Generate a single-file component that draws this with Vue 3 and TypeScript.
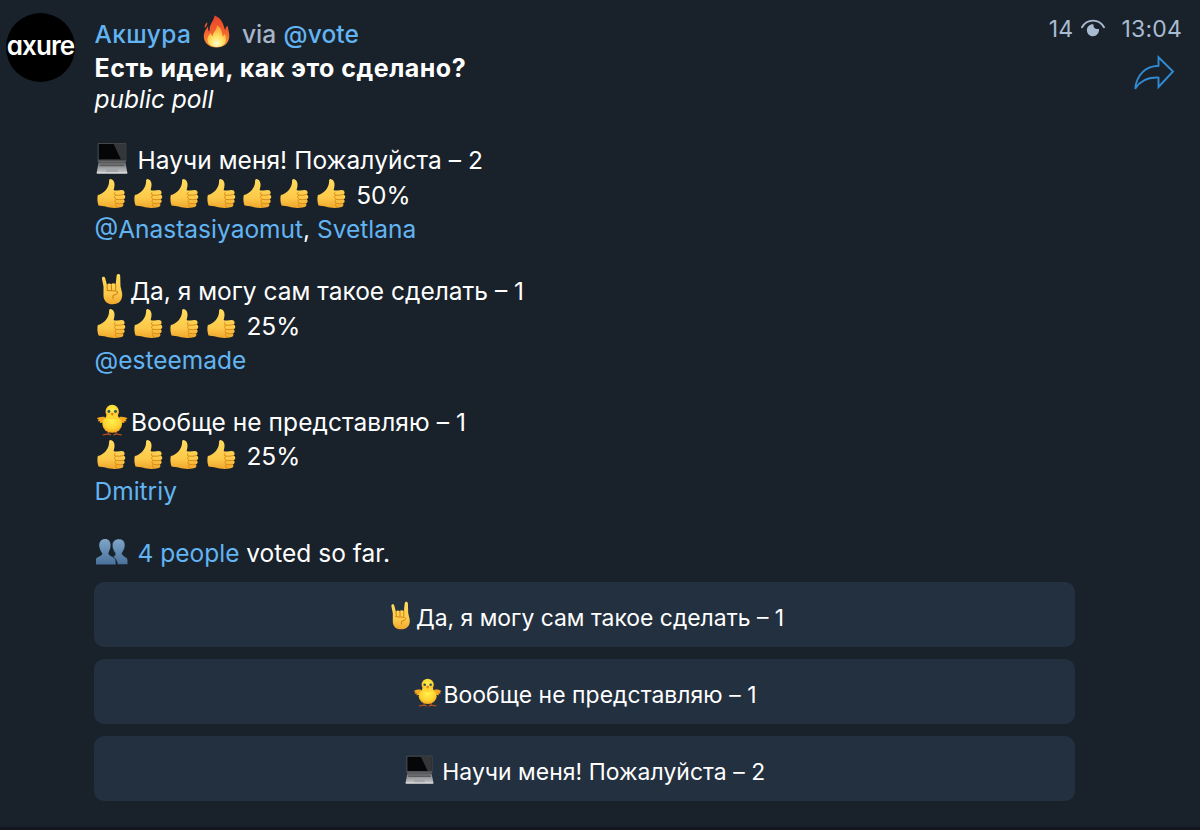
<script setup lang="ts">
interface Voter {
  name: string
}
interface PollOption {
  id: string
  icon: string
  label: string
  thumbs: number
  percent: string
  voters: Voter[]
}

const options: PollOption[] = [
  {
    id: 'teach',
    icon: 'laptop',
    label: 'Научи меня! Пожалуйста – 2',
    thumbs: 7,
    percent: '50%',
    voters: [{ name: '@Anastasiyaomut' }, { name: 'Svetlana' }],
  },
  {
    id: 'self',
    icon: 'horns',
    label: 'Да, я могу сам такое сделать – 1',
    thumbs: 4,
    percent: '25%',
    voters: [{ name: '@esteemade' }],
  },
  {
    id: 'noidea',
    icon: 'chick',
    label: 'Вообще не представляю – 1',
    thumbs: 4,
    percent: '25%',
    voters: [{ name: 'Dmitriy' }],
  },
]

const buttons: PollOption[] = [options[1], options[2], options[0]]
</script>

<template>
  <svg class="defs" width="0" height="0" aria-hidden="true">
    <defs>
      <linearGradient id="skin" x1="0" y1="0" x2="0" y2="1">
        <stop offset="0" stop-color="#ffdc5e" />
        <stop offset="0.65" stop-color="#fdc94a" />
        <stop offset="1" stop-color="#efa62a" />
      </linearGradient>
      <linearGradient id="flame" x1="0" y1="0" x2="0" y2="1">
        <stop offset="0" stop-color="#e8412b" />
        <stop offset="0.5" stop-color="#f4602c" />
        <stop offset="1" stop-color="#fb9a34" />
      </linearGradient>
      <radialGradient id="flameCore" cx="0.5" cy="0.85" r="0.75">
        <stop offset="0" stop-color="#fffbd0" />
        <stop offset="0.45" stop-color="#ffe263" />
        <stop offset="1" stop-color="#fba637" />
      </radialGradient>
      <radialGradient id="down" cx="0.5" cy="0.35" r="0.7">
        <stop offset="0" stop-color="#fff04f" />
        <stop offset="0.6" stop-color="#ffd32f" />
        <stop offset="1" stop-color="#f3981b" />
      </radialGradient>
      <linearGradient id="bust" x1="0" y1="0" x2="0" y2="1">
        <stop offset="0" stop-color="#7fa6c9" />
        <stop offset="1" stop-color="#49709a" />
      </linearGradient>
      <linearGradient id="deck" x1="0" y1="0" x2="0" y2="1">
        <stop offset="0" stop-color="#77787a" />
        <stop offset="1" stop-color="#c9cacc" />
      </linearGradient>

      <symbol id="thumb" viewBox="0 0 32 32">
        <path fill="url(#skin)" d="M1.900 17.600C4.600 17 8 15.200 10.200 12.400C12.200 9.700 13.500 7 13.500 3.600C13.400 1.500 14.400 .8 15.800 1.200C18.700 2 19.700 5.700 18.900 9.200L18.200 12.300C18.800 12.900 20.600 13.100 22 12.900L26.400 12.500C29.700 12.300 30.600 16.200 28.300 17.100C31 17.900 30.700 21.500 28.200 22C30.400 23 29.800 26 27.500 26.400C29.200 27.500 28 30 25.600 30.300C20.700 31.400 14.500 31.200 10.700 29.800C7.800 28.700 4.500 28.900 2.600 28.400C1.500 25.500 1 20.900 1.900 17.600Z" />
        <path fill="none" stroke="#d98a18" stroke-width="1" stroke-linecap="round" d="M20.600 17.700Q24.600 18.300 28.300 17.100M20.800 22.100Q24.600 22.800 28.200 22M20.900 26.100Q24.300 27.100 27.500 26.400M19.600 14.900C18.200 16 18.600 17.300 20.600 17.700C18.700 18.700 18.700 21 20.800 22.100C19.400 22.900 19.200 25 20.900 26.100C19.500 27.300 20 28.900 21.400 29.600" />
      </symbol>

      <symbol id="horns" viewBox="0 0 32 32">
        <path fill="url(#skin)" d="M5.900 5.600C5.800 3.300 8.500 3 9.200 5.200L11 12C11.800 10.300 14 10 15.200 11.300C16.200 9.800 18.600 9.800 19.700 11.300L20.600 2.800C20.900 .3 24.100 .3 24.200 2.900L24.500 13.200L26.100 20C27.200 27.300 22.500 31.300 16.700 31.300C10.200 31.300 7.300 27 7.500 21.700L7.500 13.500Z" />
        <path fill="none" stroke="#cf8014" stroke-width="1.100" stroke-linecap="round" d="M11 12L11.300 16.600M15.400 11.700L15.500 16.600M19.700 11.500L19.600 16.700M10.800 17.200C13.300 18.100 18.700 17.400 20.300 18C22.600 19 21.500 21.500 18.800 21.700C16.500 21.900 16.800 24 17.200 25.400" />
      </symbol>

      <symbol id="laptop" viewBox="0 0 32 32">
        <rect x="1.700" y=".9" width="28.500" height="19.700" rx="1.200" fill="#55575a" />
        <rect x="2.600" y="1.800" width="26.700" height="15.800" fill="#050608" />
        <path fill="#34363a" d="M17.500 1.800H29.300V17.600H25Z" />
        <path fill="url(#deck)" d="M2.600 20.600H29.400L31.300 30.400Q31.300 31.500 30.400 31.500H1.600Q.7 31.500 .7 30.400Z" />
        <path fill="#4c4d50" d="M4.400 17.800H27.600L28.700 24.300H3.300Z" opacity=".85" />
        <path stroke="#8b8c8f" stroke-width=".5" d="M4 19.700H28M3.700 21.300H28.300M3.500 22.800H28.500" />
        <path fill="#a3a4a7" d="M10.800 25.600H21.200L22 30.300H10Z" />
        <path fill="#dedfe0" d="M.8 30.300H31.300V31.500H.8Z" />
      </symbol>

      <symbol id="chick" viewBox="0 0 32 32">
        <path fill="none" stroke="#b5501c" stroke-width="1.300" stroke-linecap="round" d="M12.300 27.500V30.200M20 27.500V30.200M7.200 30.800L12.300 29.900L14.600 30.800M17.700 30.800L20 29.900L25.200 30.800" />
        <path fill="#f7a823" d="M9 13C5.500 12.400 2.500 13.300 .8 14.600L2.700 15.400L1.600 17.300L4 17.200L3.900 18.900L8.500 18.400ZM23.300 13C26.800 12.400 29.800 13.300 31.500 14.600L29.600 15.400L30.700 17.300L28.300 17.200L28.400 18.900L23.700 18.400Z" />
        <ellipse cx="16.200" cy="20" rx="9.900" ry="8.700" fill="url(#down)" />
        <ellipse cx="16.200" cy="7.700" rx="6.700" ry="7" fill="url(#down)" />
        <path fill="#ffd634" d="M10.500 11H21.900L22.900 15H9.500Z" />
        <circle cx="12.900" cy="7.500" r="1.450" fill="#2d536b" />
        <circle cx="19.500" cy="7.500" r="1.450" fill="#2d536b" />
        <path fill="#e97c1c" d="M14.400 9.300Q16.200 8 18 9.300L16.200 12Z" />
      </symbol>

      <symbol id="busts" viewBox="0 0 32 32">
        <path fill="url(#bust)" d="M10 3C13.700 3 15.500 5.700 15.500 9.200C15.500 12.600 13.900 15.400 13.300 16.900C12.900 20 19.300 20.700 20.300 23.200L20.600 28.600H.5V24.200C.5 20.700 7.300 20.500 7.300 17.500C6 15.700 4 12.500 4.100 9.200C4.100 5.700 6.300 3 10 3Z" transform="translate(-.9 0)" />
        <path fill="url(#bust)" stroke="#19222b" stroke-width=".5" d="M22.900 3C27 3 29 5.700 29 9.200C29 12.600 26.800 15.700 26 17.100C25.600 20.500 31.800 20.700 31.800 24.200V28.600H21.600C21 24.600 19.500 22.300 17 20.800C18.900 20.200 19.500 18.800 19.200 17.100C17.900 15.400 16.300 12.600 16.300 9.200C16.300 5.700 18.900 3 22.900 3Z" />
      </symbol>
    </defs>
  </svg>

  <main class="message">
    <div class="avatar"><span>axure</span></div>

    <section class="content">
      <div class="line author">
        <span class="name">Акшура</span>
        <svg class="fire" viewBox="0 0 27 33">
          <path fill="url(#flame)" d="M11.600 .5C11.200 4.500 8.300 7.200 6.900 11.800C6.400 13.600 6.700 15.300 6.300 16.500C5.200 15.600 4.900 13.500 5.200 11.200C2.200 14.500 .7 17.800 .8 21.600C1 28.500 6.500 32.500 13.500 32.500C21 32.500 26.200 28 26.300 21C26.400 16.900 25 14.300 24.600 10.700C23.200 11.500 22.300 13.200 22.200 15.600C20.400 9.300 18.800 3.200 11.600 .5Z" />
          <path fill="#ef5730" d="M4.300 7.200C2.100 8.900 1.400 10.700 1.800 13C3.500 11.400 4.500 9.600 4.300 7.200Z" />
          <path fill="url(#flameCore)" d="M13.800 10.500C14.300 15.200 9.800 16.800 9.700 21.200C8.400 20.500 7.900 19.400 7.900 18C5.200 20.500 4.300 22.500 4.500 25.100C4.900 29.500 8.500 31.900 13.500 31.900C18.900 31.900 22.700 29.300 23 24.700C23.100 22.400 22.300 20.800 22 19C21 19.700 20.300 20.700 20 22C18.700 18 19.200 13 13.800 10.500Z" />
        </svg>
        <span class="via">via</span>
        <span class="bot">@vote</span>
      </div>
      <div class="line question">Есть идеи, как это сделано?</div>
      <div class="line kind">public poll</div>

      <article v-for="o in options" :key="o.id" class="option" :class="o.id">
        <div class="line">
          <svg class="emoji"><use :href="'#' + o.icon" /></svg>
          <span class="label">{{ o.label }}</span>
        </div>
        <div class="line">
          <svg v-for="n in o.thumbs" :key="n" class="emoji thumb"><use href="#thumb" /></svg>
          <span class="percent">{{ o.percent }}</span>
        </div>
        <div class="line voters">
          <template v-for="(v, i) in o.voters" :key="v.name"><span v-if="i > 0">,&nbsp;</span><a class="link">{{ v.name }}</a></template>
        </div>
      </article>

      <div class="line total">
        <svg class="emoji"><use href="#busts" /></svg>
        <span class="summary"><a class="link">4 people</a> voted so far.</span>
      </div>

      <div class="buttons">
        <button v-for="b in buttons" :key="b.id" type="button" :class="b.id">
          <svg class="emoji"><use :href="'#' + b.icon" /></svg>
          <span class="label">{{ b.label }}</span>
        </button>
      </div>
    </section>

    <aside class="meta">
      <div class="stats">
        <span class="views">14</span>
        <svg class="eye" viewBox="0 0 24 18">
          <path d="M1 8.200C6 -.6 18 -.6 23 8.200" fill="none" stroke="#a9bbd0" stroke-width="1.900" stroke-linecap="round" />
          <path d="M12.500 5.400C12.200 8.500 14.500 10.500 18 10C18.400 14 15.600 17.200 12 17.200C8.500 17.200 5.900 14.500 5.900 11.200C5.900 7.700 9 5 12.500 5.400Z" fill="#a9bbd0" />
        </svg>
        <span class="time">13:04</span>
      </div>
      <svg class="share" viewBox="0 0 42 36">
        <path d="M25.500 2.200L40 16.500L25.500 32V22.600C15 22 7.500 25 2.200 33.800C3.500 20.500 11.500 11.500 25.500 10.800Z" fill="none" stroke="#318bd2" stroke-width="1.900" stroke-linejoin="miter" />
      </svg>
    </aside>
  </main>
</template>

<style>
html,
body {
  background: #19222b;
}
</style>

<style scoped>
.defs {
  position: absolute;
}
.message {
  box-sizing: border-box;
  width: 1200px;
  height: 830px;
  display: grid;
  grid-template-columns: 94.500px 980.500px 125px;
  background: #19222b;
  border-bottom: 3px solid #12141e;
  overflow: hidden;
  font-family: Inter, "Noto Sans", sans-serif;
  font-size: 24.500px;
  color: #fff;
}
.avatar {
  width: 69px;
  height: 69px;
  margin: 13px 0 0 6px;
  border-radius: 50%;
  background: #000;
  display: flex;
  align-items: center;
  justify-content: center;
  font-size: 26px;
  font-weight: 600;
  font-feature-settings: "cv11";
  letter-spacing: -.9px;
  line-height: 60px;
}
.avatar span {
  margin-top: -4px;
}
.content {
  padding-top: 16.600px;
  min-width: 0;
}
.line {
  display: flex;
  align-items: center;
  height: 34.600px;
  line-height: 34.600px;
  white-space: pre;
}
.author {
  font-weight: 500;
}
.name,
.bot,
.link {
  color: #62b4f2;
}
.name {
  width: 108px;
  letter-spacing: .4px;
}
.bot {
  letter-spacing: .1px;
}
.fire {
  width: 27px;
  height: 33px;
  margin-top: -5px;
}
.via {
  width: 41.500px;
  margin-left: 12.500px;
  color: #a9b5c8;
}
.question {
  font-weight: 700;
  font-size: 25px;
  letter-spacing: .5px;
}
.kind {
  margin-top: -4.200px;
  font-style: italic;
}
.option {
  margin-top: 27px;
}
.emoji {
  flex: none;
  width: 32px;
  height: 32px;
  margin: -5px 2.500px 0 1px;
}
.thumb {
  width: 31px;
  height: 31px;
  margin: -4px 4.100px 0 1.500px;
}
.percent {
  margin-left: 5.500px;
}
.teach .label,
.summary {
  margin-left: 7.500px;
}
.teach .label,
.noidea .label {
  letter-spacing: .06px;
}
.noidea .label {
  margin-left: 1px;
}
.total {
  margin-top: 27px;
}
.total .emoji {
  margin-top: -2px;
}
.buttons {
  display: grid;
  gap: 12px;
  width: 981px;
  margin: 11.700px 0 0 -.5px;
}
button {
  display: flex;
  align-items: center;
  justify-content: center;
  height: 65px;
  padding: 8px 0 0;
  border: 0;
  border-radius: 10px;
  background: #23303f;
  color: #fff;
  font: inherit;
  font-size: 22.900px;
  white-space: pre;
}
button .emoji {
  width: 29px;
  height: 29px;
  margin-right: 1px;
}
button.noidea .label {
  margin-left: 0;
}
.meta {
  display: flex;
  flex-direction: column;
  align-items: flex-end;
  padding-top: 12px;
  color: #a9bbd0;
}
.stats {
  display: flex;
  align-items: center;
  height: 34px;
  margin-right: 18px;
  font-size: 23px;
  letter-spacing: .2px;
}
.eye {
  width: 24px;
  height: 18px;
  margin: -2px 16px 0 8px;
}
.share {
  width: 42px;
  height: 36px;
  margin: 9px 25px 0 0;
}
</style>
